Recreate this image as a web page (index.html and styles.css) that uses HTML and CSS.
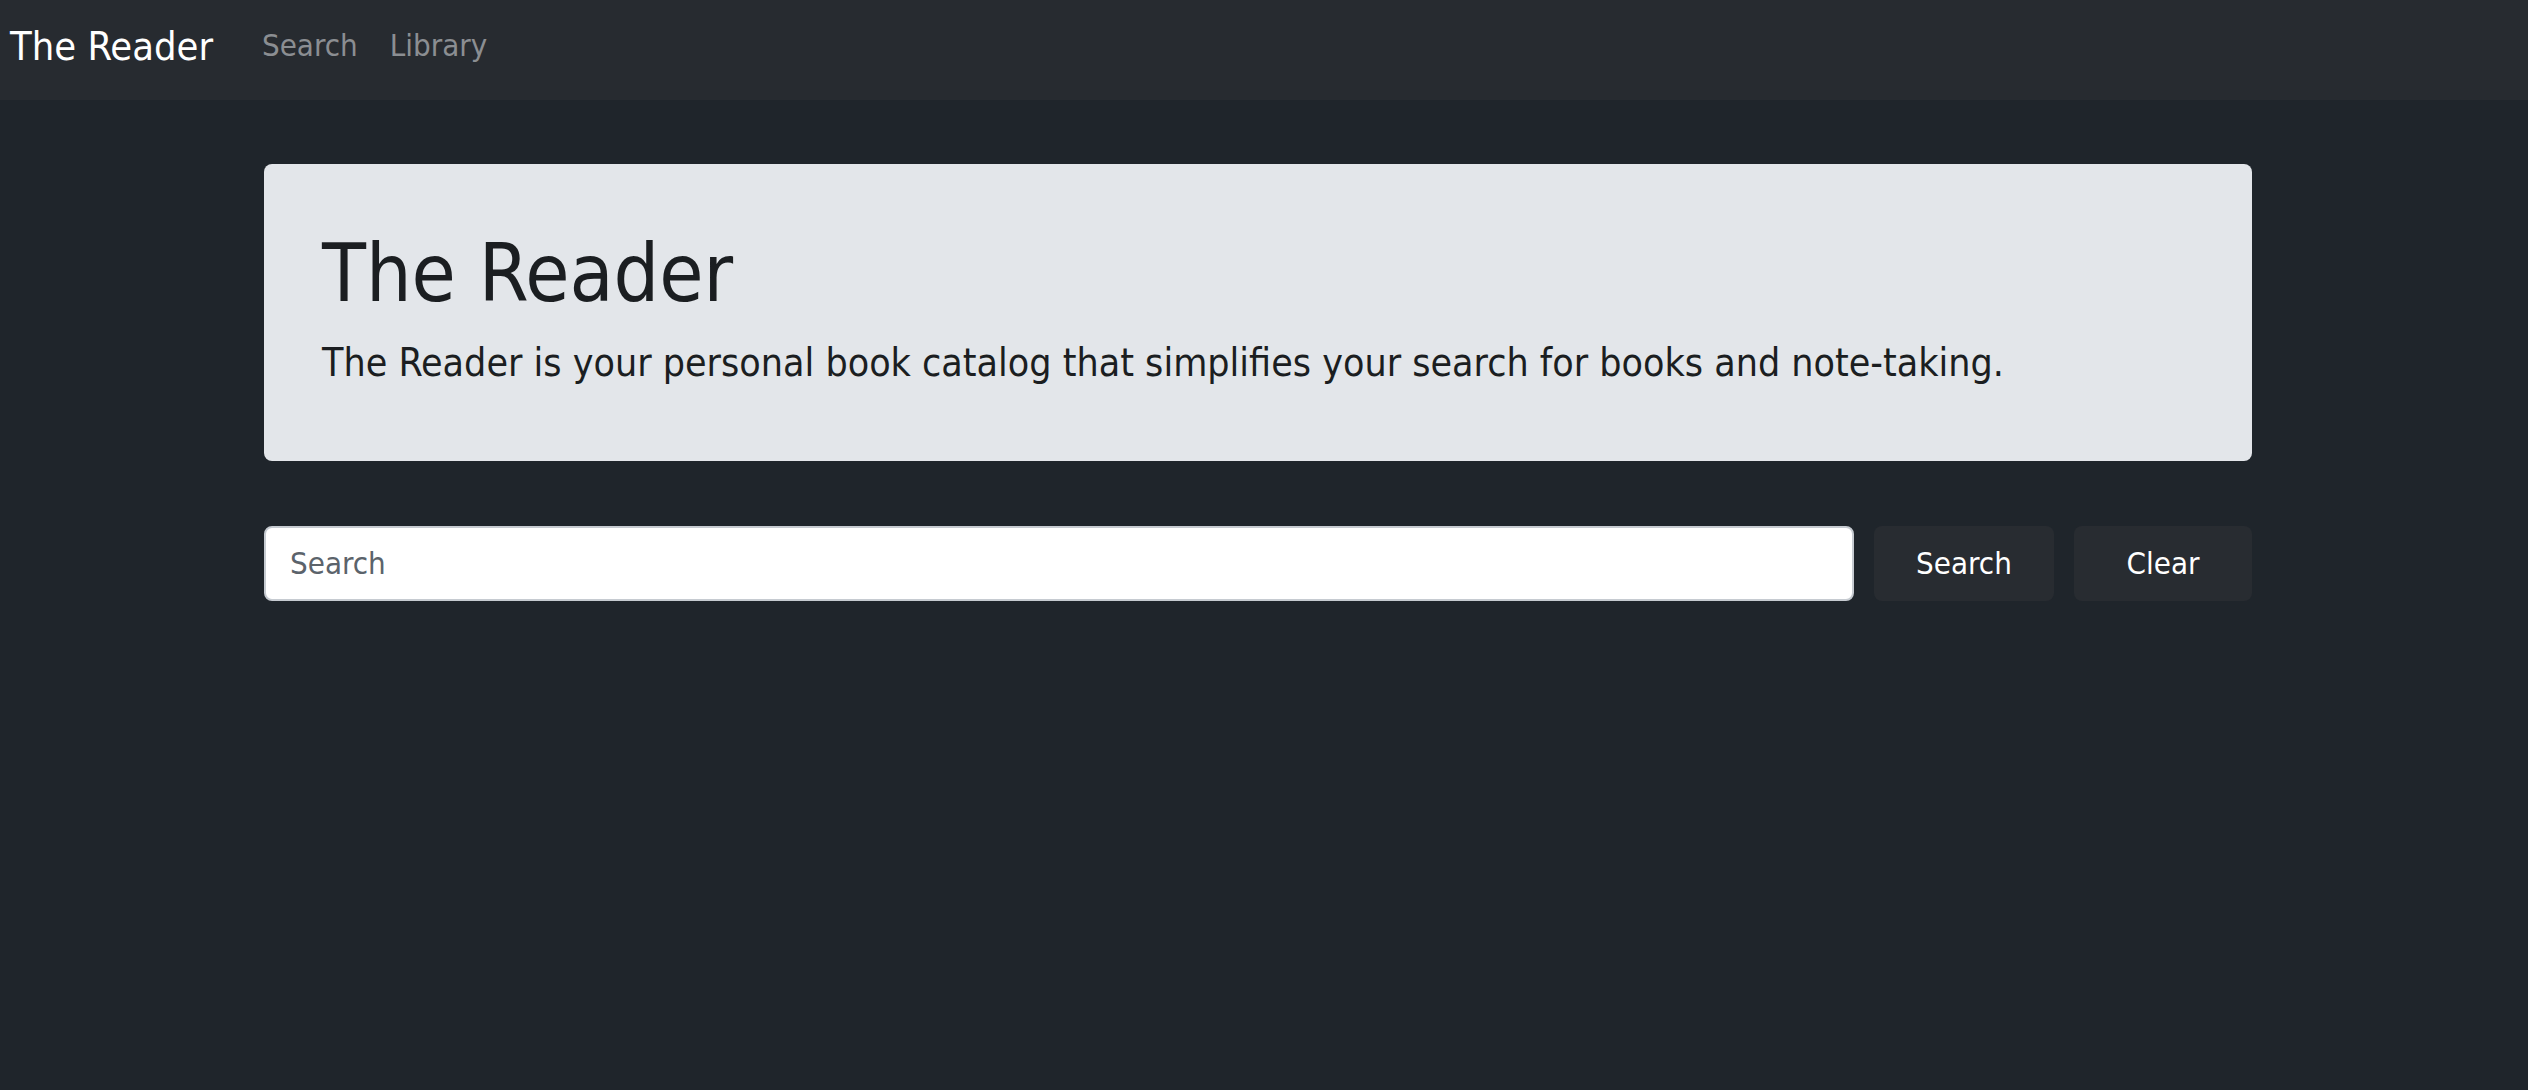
FILE: index.html
```html
<!DOCTYPE html>
<html lang="en">
<head>
<meta charset="utf-8">
<title>The Reader</title>
<link rel="stylesheet" href="styles.css">
</head>
<body>
<nav class="navbar">
  <a class="brand" href="#">The Reader</a>
  <div class="nav-links">
    <a class="nav-link" href="#">Search</a>
    <a class="nav-link" href="#">Library</a>
  </div>
</nav>
<main class="container">
  <section class="jumbotron">
    <h1 class="title">The Reader</h1>
    <p class="lead">The Reader is your personal book catalog that simplifies your search for books and note-taking.</p>
  </section>
  <form class="search-row">
    <input class="search-input" type="text" placeholder="Search">
    <button class="btn btn-search" type="button">Search</button>
    <button class="btn btn-clear" type="button">Clear</button>
  </form>
</main>
</body>
</html>
```
FILE: styles.css
```css
html, body {
  margin: 0;
  padding: 0;
}
body {
  background: #1f252b;
  font-family: "DejaVu Sans Condensed", "DejaVu Sans", sans-serif;
  font-stretch: condensed;
  color: #1b1e21;
  min-height: 1090px;
}
.navbar {
  height: 100px;
  background: #272b30;
  display: flex;
  align-items: flex-start;
  padding-left: 10px;
  box-sizing: border-box;
}
.brand {
  color: #ffffff;
  text-decoration: none;
  font-size: 39.5px;
  line-height: 40px;
  padding-top: 26px;
  margin-right: 33px;
}
.nav-links {
  display: flex;
  padding-top: 29px;
}
.nav-link {
  color: #8b8e92;
  text-decoration: none;
  font-size: 31px;
  line-height: 32px;
  padding: 0 16px;
}
.container {
  margin: 0 276px 0 264px;
  padding-top: 64px;
}
.jumbotron {
  background: #e3e6ea;
  border-radius: 8px;
  padding: 62px 58px 68px;
}
.title {
  margin: 0;
  font-size: 80px;
  font-weight: normal;
  line-height: 1.2;
  color: #1b1e21;
}
.lead {
  margin: 12px 0 0;
  font-size: 39px;
  line-height: 1.5;
  color: #1b1e21;
}
.search-row {
  display: flex;
  gap: 20px;
  margin-top: 65px;
}
.search-input {
  flex: 1;
  height: 75px;
  box-sizing: border-box;
  border: 2px solid #c6cbd1;
  border-radius: 8px;
  padding: 0 24px;
  font-family: inherit;
  font-stretch: condensed;
  font-size: 31px;
  color: #495057;
  background: #ffffff;
  outline: none;
}
.search-input::placeholder {
  color: #5b636b;
}
.btn {
  height: 75px;
  box-sizing: border-box;
  border: none;
  border-radius: 8px;
  background: #282c31;
  color: #ffffff;
  font-family: inherit;
  font-stretch: condensed;
  font-size: 31px;
  padding: 0;
}
.btn-search {
  width: 180px;
}
.btn-clear {
  width: 178px;
}
```
